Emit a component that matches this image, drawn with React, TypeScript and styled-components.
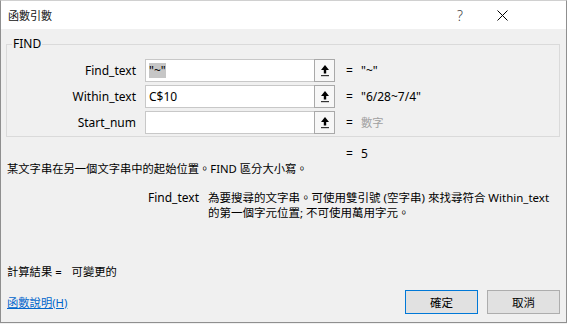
import React from 'react';
import styled, {createGlobalStyle} from 'styled-components';

const GlobalStyle = createGlobalStyle`
  * {
    box-sizing: border-box;
  }

  html, body {
    margin: 0;
    padding: 0;
    background: #f0f0f0;
  }

  body {
    font-family: "Noto Sans", "Noto Sans CJK TC", sans-serif;
    font-size: 12px;
    color: #000;
  }
`;

type Arg = {
    name: string;
    value: string;
    result: string;
    selected?: boolean;
    hint?: boolean;
};

const args: Arg[] = [
    {name: 'Find_text', value: '"~"', result: '"~"', selected: true},
    {name: 'Within_text', value: 'C$10', result: '"6/28~7/4"'},
    {name: 'Start_num', value: '', result: '數字', hint: true},
];

const RefIcon = () => (
    <svg width="10" height="13" viewBox="0 0 10 13">
        <path d="M5 1 L9 6 L6.2 6 L6.2 9.5 L3.8 9.5 L3.8 6 L1 6 Z" fill="#000"/>
        <rect x="1" y="11" width="8" height="1.2" fill="#333"/>
    </svg>
);

const CloseIcon = () => (
    <svg width="11" height="11" viewBox="0 0 11 11">
        <path d="M0.5 0.5 L10.5 10.5 M10.5 0.5 L0.5 10.5" stroke="#000" strokeWidth="1"/>
    </svg>
);

export default function App() {
    return (
        <>
            <GlobalStyle/>
            <Window>
                <TitleBar>
                    <Title>函數引數</Title>
                    <TitleBtn>?</TitleBtn>
                    <TitleBtn><CloseIcon/></TitleBtn>
                </TitleBar>
                <Body>
                    <Group>
                        <Legend>FIND</Legend>
                        <Rows>
                            {args.map(a => (
                                <ArgRow key={a.name}>
                                    <ArgLabel>{a.name}</ArgLabel>
                                    <InputBox>
                                        <InputText>
                                            {a.selected ? <Selected>{a.value}</Selected> : a.value}
                                        </InputText>
                                        <RefButton><RefIcon/></RefButton>
                                    </InputBox>
                                    <Eq>=</Eq>
                                    <Value $hint={a.hint}>{a.result}</Value>
                                </ArgRow>
                            ))}
                        </Rows>
                    </Group>
                    <ResultLine>
                        <Eq>=</Eq>
                        <Value>5</Value>
                    </ResultLine>
                    <Description>某文字串在另一個文字串中的起始位置。FIND 區分大小寫。</Description>
                    <ArgHelp>
                        <HelpName>Find_text</HelpName>
                        <HelpText>
                            <span>為要搜尋的文字串。可使用雙引號 (空字串) 來找尋符合 Within_text</span>
                            <span>的第一個字元位置; 不可使用萬用字元。</span>
                        </HelpText>
                    </ArgHelp>
                    <CalcLine>
                        <span>計算結果 =</span>
                        <span>可變更的</span>
                    </CalcLine>
                    <Footer>
                        <HelpLink href="#">函數說明(H)</HelpLink>
                        <DialogButton $primary>確定</DialogButton>
                        <DialogButton>取消</DialogButton>
                    </Footer>
                </Body>
            </Window>
        </>
    );
}

const Window = styled.div`
  width: 567px;
  height: 323px;
  display: flex;
  flex-direction: column;
  background: #f0f0f0;
  border: 1px solid #8f8f8f;
  border-top-color: #d0d0d0;
`;

const TitleBar = styled.div`
  height: 28px;
  background: #fff;
  display: flex;
  align-items: center;
  padding: 0 43px 0 7px;
`;

const Title = styled.div`
  flex: 1;
  font-size: 11px;
  line-height: 15px;
  color: #111;
`;

const TitleBtn = styled.div`
  width: 42px;
  height: 28px;
  display: flex;
  align-items: center;
  justify-content: center;
  font-size: 14px;
  font-weight: 300;
  color: #444;
`;

const Body = styled.div`
  flex: 1;
  display: flex;
  flex-direction: column;
  padding: 0 6px 8px 5px;
`;

const Group = styled.fieldset`
  margin: 8px 0 0;
  padding: 8px 0 3px;
  border: 1px solid #dadada;
  min-width: 0;
`;

const Legend = styled.legend`
  margin-left: 5px;
  padding: 0 1px;
  line-height: 14px;
`;

const Rows = styled.div`
  display: flex;
  flex-direction: column;
  gap: 4px;
`;

const ArgRow = styled.div`
  display: flex;
  align-items: center;
  height: 22px;
`;

const ArgLabel = styled.div`
  width: 129px;
  margin-right: 9px;
  text-align: right;
  line-height: 15px;
`;

const InputBox = styled.div`
  width: 190px;
  height: 23px;
  display: flex;
  background: #fff;
  border: 1px solid #c8c8c8;
`;

const InputText = styled.div`
  flex: 1;
  display: flex;
  align-items: center;
  padding-left: 3px;
  line-height: 15px;
`;

const Selected = styled.span`
  background: #c6c6c6;
`;

const RefButton = styled.div`
  width: 21px;
  display: flex;
  align-items: center;
  justify-content: center;
  background: #f7f7f7;
  border: 1px solid #a9a9a9;
  margin: -1px -1px -1px 0;
`;

const Eq = styled.span`
  width: 15px;
  margin-left: 11px;
  line-height: 15px;
`;

const Value = styled.span<{ $hint?: boolean }>`
  line-height: 15px;
  font-size: ${(p) => (p.$hint ? '11.3px' : '12px')};
  color: ${(p) => (p.$hint ? '#a0a0a0' : '#000')};
`;

const ResultLine = styled.div`
  display: flex;
  margin-top: 9px;
  padding-left: 329px;
`;

const Description = styled.div`
  font-size: 11.3px;
  line-height: 15px;
  padding-left: 1px;
`;

const ArgHelp = styled.div`
  display: flex;
  margin-top: 14px;
  padding-left: 142px;
  line-height: 15px;
`;

const HelpName = styled.div`
  width: 60px;
`;

const HelpText = styled.div`
  display: flex;
  flex-direction: column;
  white-space: nowrap;
  font-size: 11.5px;
`;

const CalcLine = styled.div`
  display: flex;
  gap: 10px;
  margin-top: 44px;
  padding-left: 1px;
  font-size: 11.3px;
  line-height: 15px;
`;

const Footer = styled.div`
  margin-top: auto;
  display: flex;
  align-items: center;
  gap: 9px;
`;

const HelpLink = styled.a`
  flex: 1;
  padding-left: 1px;
  font-size: 11.3px;
  color: #0066cc;
  text-decoration: underline;
  line-height: 15px;
`;

const DialogButton = styled.button<{ $primary?: boolean }>`
  width: 73px;
  height: 24px;
  padding: 0;
  font: inherit;
  font-size: 11.5px;
  color: #000;
  background: #e1e1e1;
  border: 1px solid ${(p) => (p.$primary ? '#0078d7' : '#adadad')};
`;
